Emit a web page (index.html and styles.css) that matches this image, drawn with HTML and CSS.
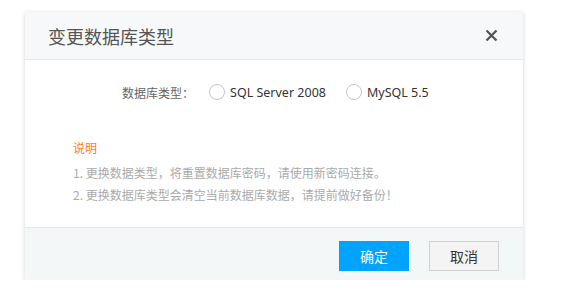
FILE: index.html
```html
<!DOCTYPE html>
<html lang="zh-CN">
<head>
<meta charset="utf-8">
<link rel="stylesheet" href="styles.css">
</head>
<body>
<div class="dialog">
  <div class="dialog-header">
    <h3 class="dialog-title">变更数据库类型</h3>
    <span class="dialog-close" aria-label="close">
      <svg width="13" height="13" viewBox="0 0 13 13"><path d="M1.5 1.5 L11.5 11.5 M11.5 1.5 L1.5 11.5" stroke="#555" stroke-width="2.3" stroke-linecap="butt"/></svg>
    </span>
  </div>
  <div class="dialog-body">
    <div class="form-row">
      <span class="form-label">数据库类型：</span>
      <label class="radio"><span class="radio-circle"></span><span class="radio-text">SQL Server 2008</span></label>
      <label class="radio"><span class="radio-circle"></span><span class="radio-text">MySQL 5.5</span></label>
    </div>
    <div class="notes">
      <div class="notes-title">说明</div>
      <p class="note">1. 更换数据类型，将重置数据库密码，请使用新密码连接。</p>
      <p class="note">2. 更换数据库类型会清空当前数据库数据，请提前做好备份！</p>
    </div>
  </div>
  <div class="dialog-footer">
    <button class="btn btn-primary">确定</button>
    <button class="btn btn-default">取消</button>
  </div>
</div>
</body>
</html>
```

FILE: styles.css
```css
html, body {
  margin: 0;
  padding: 0;
  background: #fff;
}
body {
  font-family: "Noto Sans", "Noto Sans CJK SC", sans-serif;
  padding: 12px 0 0 25px;
}
.dialog {
  width: 498px;
  background: #fff;
  box-shadow: 0 1px 4px rgba(0, 0, 0, 0.18);
}
.dialog-header {
  height: 47px;
  background: #f6f8fa;
  border-bottom: 1px solid #e6e8eb;
  display: flex;
  align-items: center;
  justify-content: space-between;
  padding: 0 25px 0 23px;
}
.dialog-title {
  margin: 0;
  font-family: "Noto Sans CJK SC", sans-serif;
  font-weight: 400;
  font-size: 18px;
  color: #555;
  line-height: 24px;
}
.dialog-close {
  display: flex;
  width: 13px;
  height: 13px;
}
.dialog-body {
  height: 167px;
  box-sizing: border-box;
  padding-top: 22px;
}
.form-row {
  display: flex;
  align-items: center;
  padding-left: 97px;
  height: 20px;
}
.form-label {
  font-family: "Noto Sans CJK SC", sans-serif;
  font-size: 12px;
  color: #666;
  margin-right: 15px;
}
.radio {
  display: flex;
  align-items: center;
  margin-right: 20px;
}
.radio-circle {
  width: 14px;
  height: 14px;
  border: 1px solid #c5c5c5;
  border-radius: 50%;
  margin-right: 5px;
}
.radio-text {
  font-size: 12.5px;
  color: #333;
}
.notes {
  padding-left: 48px;
  margin-top: 35px;
  font-family: "Noto Sans CJK SC", sans-serif;
  font-size: 12px;
  line-height: 22px;
}
.notes-title {
  color: #ff7a1a;
  margin-bottom: 3px;
}
.note {
  margin: 0;
  color: #aaa;
}
.dialog-footer {
  background: #f4f7f8;
  border-top: 1px solid #e6e8eb;
  height: 53px;
  box-sizing: border-box;
  padding: 13px 24px 0 0;
  display: flex;
  justify-content: flex-end;
  align-items: flex-start;
  gap: 20px;
}
.btn {
  width: 70px;
  height: 30px;
  font-family: "Noto Sans CJK SC", sans-serif;
  font-size: 14px;
  padding: 0;
  cursor: pointer;
}
.btn-primary {
  background: #00a4ff;
  border: none;
  color: #fff;
}
.btn-default {
  background: #f4f4f4;
  border: 1px solid #d2d2d2;
  color: #333;
}
```
